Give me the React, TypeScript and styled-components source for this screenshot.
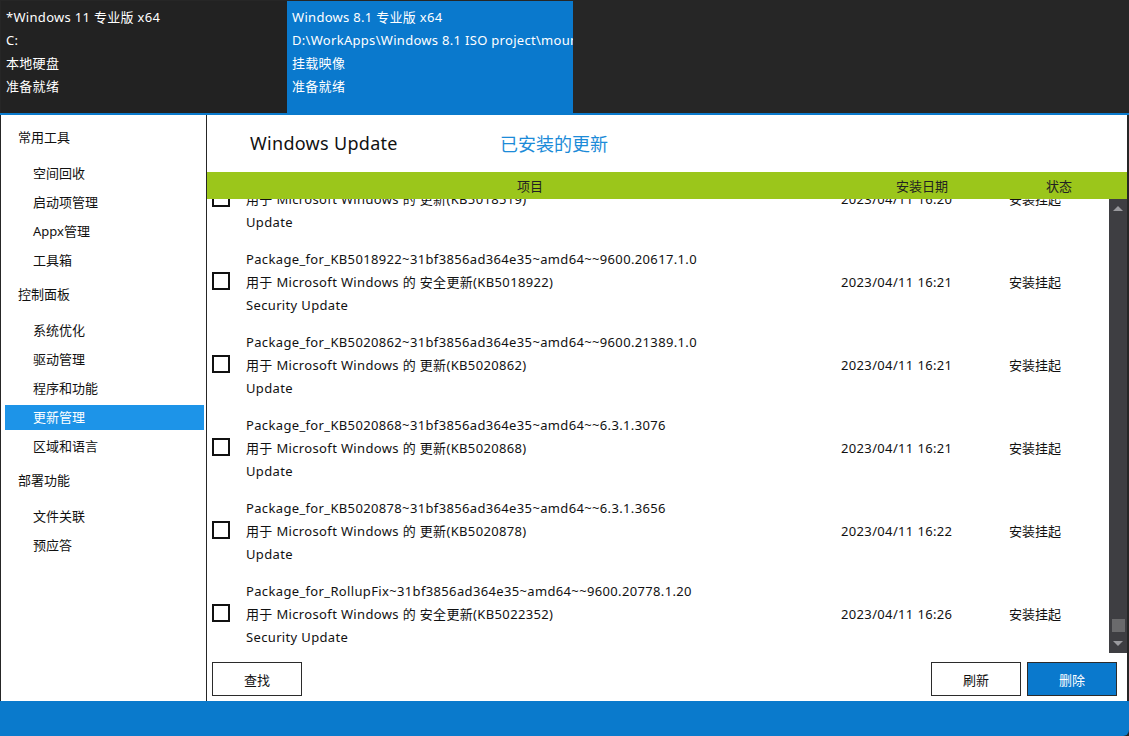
import React, { useLayoutEffect, useRef } from 'react'
import styled, { createGlobalStyle } from 'styled-components'

const GlobalStyle = createGlobalStyle`
  html, body {
    margin: 0;
    padding: 0;
    height: 100%;
    background: #262626;
  }
  body {
    font-family: "Segoe UI", "Microsoft YaHei", "Noto Sans", "Noto Sans CJK SC", sans-serif;
    font-size: 13px;
    color: #111;
  }
  #root {
    height: 100%;
  }
`

type Pkg = {
  name: string
  desc: string
  kind: string
  date: string
}

const packages: Pkg[] = [
  {
    name: 'Package_for_KB5018519~31bf3856ad364e35~amd64~~9600.20596.1.2',
    desc: '用于 Microsoft Windows 的 更新(KB5018519)',
    kind: 'Update',
    date: '2023/04/11 16:20',
  },
  {
    name: 'Package_for_KB5018922~31bf3856ad364e35~amd64~~9600.20617.1.0',
    desc: '用于 Microsoft Windows 的 安全更新(KB5018922)',
    kind: 'Security Update',
    date: '2023/04/11 16:21',
  },
  {
    name: 'Package_for_KB5020862~31bf3856ad364e35~amd64~~9600.21389.1.0',
    desc: '用于 Microsoft Windows 的 更新(KB5020862)',
    kind: 'Update',
    date: '2023/04/11 16:21',
  },
  {
    name: 'Package_for_KB5020868~31bf3856ad364e35~amd64~~6.3.1.3076',
    desc: '用于 Microsoft Windows 的 更新(KB5020868)',
    kind: 'Update',
    date: '2023/04/11 16:21',
  },
  {
    name: 'Package_for_KB5020878~31bf3856ad364e35~amd64~~6.3.1.3656',
    desc: '用于 Microsoft Windows 的 更新(KB5020878)',
    kind: 'Update',
    date: '2023/04/11 16:22',
  },
  {
    name: 'Package_for_RollupFix~31bf3856ad364e35~amd64~~9600.20778.1.20',
    desc: '用于 Microsoft Windows 的 安全更新(KB5022352)',
    kind: 'Security Update',
    date: '2023/04/11 16:26',
  },
]

const menu = [
  { title: '常用工具', items: ['空间回收', '启动项管理', 'Appx管理', '工具箱'] },
  { title: '控制面板', items: ['系统优化', '驱动管理', '程序和功能', '更新管理', '区域和语言'] },
  { title: '部署功能', items: ['文件关联', '预应答'] },
]

const images = [
  { lines: ['*Windows 11 专业版 x64', 'C:', '本地硬盘', '准备就绪'], active: false },
  {
    lines: ['Windows 8.1 专业版 x64', 'D:\\WorkApps\\Windows 8.1 ISO project\\mount', '挂载映像', '准备就绪'],
    active: true,
  },
]

function App() {
  const listRef = useRef<HTMLDivElement>(null)

  // the list is shown scrolled to its end
  useLayoutEffect(() => {
    if (listRef.current) {
      listRef.current.scrollTop = listRef.current.scrollHeight
    }
  }, [])

  return (
    <>
      <GlobalStyle />
      <Window>
        <TopBar>
          {images.map((img, i) => (
            <ImageCard key={i} $active={img.active}>
              {img.lines.map((line) => (
                <CardLine key={line}>{line}</CardLine>
              ))}
            </ImageCard>
          ))}
        </TopBar>

        <Body>
          <Sidebar>
            {menu.map((group) => (
              <Group key={group.title}>
                <GroupTitle>{group.title}</GroupTitle>
                <ItemList>
                  {group.items.map((item) => (
                    <MenuItem key={item} $selected={item === '更新管理'}>
                      {item}
                    </MenuItem>
                  ))}
                </ItemList>
              </Group>
            ))}
          </Sidebar>

          <Main>
            <TitleRow>
              <Title>Windows Update</Title>
              <SubTitle>已安装的更新</SubTitle>
            </TitleRow>

            <TableHeader>
              <HeaderCell>项目</HeaderCell>
              <HeaderCell>安装日期</HeaderCell>
              <HeaderCell>状态</HeaderCell>
            </TableHeader>

            <ListArea>
              <List ref={listRef}>
                {packages.map((p) => (
                  <Row key={p.name}>
                    <CheckCell>
                      <CheckBox />
                    </CheckCell>
                    <InfoCell>
                      <Line>{p.name}</Line>
                      <Line>{p.desc}</Line>
                      <Line>{p.kind}</Line>
                    </InfoCell>
                    <ValueCell>{p.date}</ValueCell>
                    <ValueCell $cjk>安装挂起</ValueCell>
                  </Row>
                ))}
              </List>
              <ScrollBar>
                <Arrow>
                  <svg width="10" height="6" viewBox="0 0 10 6">
                    <path d="M0 6 L5 1 L10 6 Z" fill="#9a9a9e" />
                  </svg>
                </Arrow>
                <Track>
                  <Thumb />
                </Track>
                <Arrow>
                  <svg width="10" height="6" viewBox="0 0 10 6">
                    <path d="M0 0 L5 5 L10 0 Z" fill="#9a9a9e" />
                  </svg>
                </Arrow>
              </ScrollBar>
            </ListArea>

            <Footer>
              <Button>查找</Button>
              <Spacer />
              <Button>刷新</Button>
              <Button $primary>删除</Button>
            </Footer>
          </Main>
        </Body>

        <StatusBar />
      </Window>
    </>
  )
}

export default App

const Window = styled.div`
  display: flex;
  flex-direction: column;
  height: 736px;
  width: 1129px;
  background: #262626;
  overflow: hidden;
`

const TopBar = styled.div`
  display: flex;
  height: 112px;
  padding: 1px 0 0 1px;
  border-bottom: 2px solid #0a7acc;
  background: #262626;
`

const ImageCard = styled.div<{ $active: boolean }>`
  width: 286px;
  padding: 5px 5px 0 5px;
  box-sizing: border-box;
  background: ${({ $active }) => ($active ? '#0a79cd' : '#222222')};
  color: #fff;
  overflow: hidden;
`

const CardLine = styled.div`
  height: 23px;
  line-height: 23px;
  white-space: nowrap;
  letter-spacing: 0.3px;
`

const Body = styled.div`
  flex: 1;
  display: flex;
  min-height: 0;
  padding-right: 2px;
  background: #262626;
`

const Sidebar = styled.div`
  width: 207px;
  box-sizing: border-box;
  background: #fff;
  border-left: 1px solid #262626;
  border-right: 1px solid #262626;
  padding: 11px 2px 0 4px;
`

const Group = styled.div`
  margin-bottom: 10px;
`

const GroupTitle = styled.div`
  height: 25px;
  line-height: 23px;
  padding-left: 13px;
  margin-bottom: 10px;
  color: #111;
`

const ItemList = styled.div`
  display: flex;
  flex-direction: column;
  gap: 4px;
`

const MenuItem = styled.div<{ $selected: boolean }>`
  height: 25px;
  line-height: 25px;
  padding-left: 28px;
  background: ${({ $selected }) => ($selected ? '#1d94e8' : 'transparent')};
  color: ${({ $selected }) => ($selected ? '#fff' : '#111')};
`

const Main = styled.div`
  flex: 1;
  display: flex;
  flex-direction: column;
  min-width: 0;
  background: #fff;
`

const TitleRow = styled.div`
  height: 57px;
  box-sizing: border-box;
  padding: 0 0 2px 43px;
  display: flex;
  align-items: center;
`

const Title = styled.div`
  width: 250px;
  font-size: 18px;
  letter-spacing: 0.3px;
  color: #111;
`

const SubTitle = styled.div`
  font-size: 18px;
  color: #1c8bd8;
`

const TableHeader = styled.div`
  height: 27px;
  display: grid;
  grid-template-columns: 646px 138px 1fr;
  align-items: center;
  background: #9bc61b;
  color: #222;
`

const HeaderCell = styled.div`
  text-align: center;
`

const ListArea = styled.div`
  height: 456px;
  display: flex;
`

const List = styled.div`
  flex: 1;
  overflow-y: scroll;
  scrollbar-width: none;
  &::-webkit-scrollbar {
    display: none;
  }
`

const Row = styled.div`
  height: 83px;
  box-sizing: border-box;
  padding: 8px 0 6px;
  display: grid;
  grid-template-columns: 39px 595px 168px 1fr;
  align-items: center;
  letter-spacing: 0.35px;
`

const CheckCell = styled.div`
  padding-left: 5px;
  display: flex;
  align-items: center;
`

const CheckBox = styled.div`
  width: 18px;
  height: 18px;
  box-sizing: border-box;
  border: 2px solid #111;
  background: #fff;
  margin-top: -3px;
`

const InfoCell = styled.div`
  display: flex;
  flex-direction: column;
`

const Line = styled.div`
  height: 23px;
  line-height: 23px;
  white-space: nowrap;
`

const ValueCell = styled.div<{ $cjk?: boolean }>`
  white-space: nowrap;
  margin-top: -2px;
  letter-spacing: ${({ $cjk }) => ($cjk ? '0' : '0.35px')};
`

const ScrollBar = styled.div`
  width: 18px;
  height: 454px;
  display: flex;
  flex-direction: column;
  background: #3e3e42;
`

const Arrow = styled.div`
  height: 18px;
  display: flex;
  align-items: center;
  justify-content: center;
`

const Track = styled.div`
  flex: 1;
  display: flex;
  flex-direction: column;
  justify-content: flex-end;
  align-items: center;
  padding-bottom: 3px;
`

const Thumb = styled.div`
  width: 13px;
  height: 13px;
  background: #6a6a6c;
`

const Footer = styled.div`
  flex: 1;
  display: flex;
  align-items: flex-start;
  gap: 6px;
  padding: 7px 10px 0 5px;
`

const Spacer = styled.div`
  flex: 1;
`

const Button = styled.div<{ $primary?: boolean }>`
  width: 90px;
  height: 34px;
  box-sizing: border-box;
  display: flex;
  align-items: center;
  justify-content: center;
  border: 1px solid #2b2b2b;
  background: ${({ $primary }) => ($primary ? '#0a79cd' : '#fff')};
  color: ${({ $primary }) => ($primary ? '#fff' : '#111')};
`

const StatusBar = styled.div`
  height: 35px;
  background: #0a7acc;
  border-bottom-right-radius: 6px;
`
